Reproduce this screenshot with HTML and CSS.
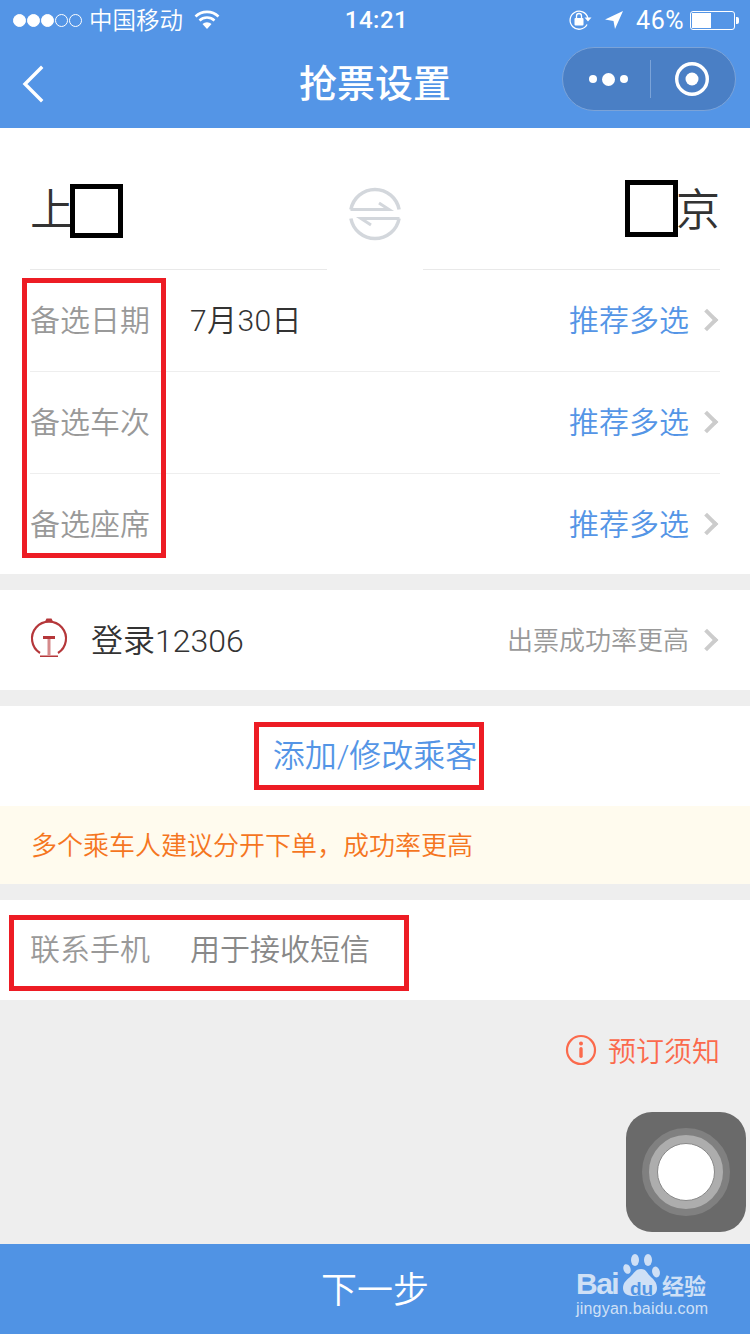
FILE: index.html
```html
<!DOCTYPE html>
<html>
<head>
    <title>抢票设置</title>
    <link rel="stylesheet" href="styles.css">
</head>
<body>
    <div class="page">
        <div class="top-bar">
            <div class="status-bar">
                <div class="status-left">
                    <span class="signal"><i class="on"></i><i class="on"></i><i class="on"></i><i></i><i></i></span>
                    <span class="carrier">中国移动</span>
                    <svg class="wifi" width="26" height="20" viewBox="0 0 26 20"><path d="M1.500 6.500a16.500 16.500 0 0 1 23 0" fill="none" stroke="#fff" stroke-width="2.600"/><path d="M5.500 10.500a11 11 0 0 1 15 0" fill="none" stroke="#fff" stroke-width="2.600"/><path d="M8.500 14a6.500 6.500 0 0 1 9 0L13 19z" fill="#fff"/></svg>
                </div>
                <div class="clock">14:21</div>
                <div class="status-right">
                    <svg width="24" height="22" viewBox="0 0 24 22"><path d="M19 15.500A9 9 0 1 1 19.800 9" fill="none" stroke="#fff" stroke-width="1.300"/><path d="M16.500 8.500h7l-3.500 4z" fill="#fff"/><rect x="6.500" y="9" width="9" height="7.500" rx="1" fill="#fff"/><path d="M8.500 9V7a2.500 2.500 0 0 1 5 0v2" fill="none" stroke="#fff" stroke-width="1.300"/></svg>
                    <svg class="arrow" width="20" height="20" viewBox="0 0 20 20"><path d="M19 1 1 9.500l8.500 1.500L11 19z" fill="#fff"/></svg>
                    <span class="battery-text">46%</span>
                    <span class="battery"><span class="battery-fill"></span></span>
                </div>
            </div>
            <div class="nav-bar">
                <svg class="back" width="24" height="38" viewBox="0 0 24 38"><path d="M20 3 4 19l16 16" fill="none" stroke="#fff" stroke-width="3.400" stroke-linecap="square"/></svg>
                <h1 class="nav-title">抢票设置</h1>
                <div class="capsule">
                    <div class="capsule-dots"><i></i><i class="big"></i><i></i></div>
                    <div class="capsule-line"></div>
                    <svg width="36" height="36" viewBox="0 0 36 36"><circle cx="18" cy="18" r="15.300" fill="none" stroke="#fff" stroke-width="3.400"/><circle cx="18" cy="18" r="6.500" fill="#fff"/></svg>
                </div>
            </div>
        </div>

        <div class="panel">
            <div class="stations">
                <div class="station">上</div>
                <svg class="swap" width="54" height="54" viewBox="0 0 54 54">
                    <path d="M2.900 22.500A24.500 24.500 0 0 1 51.100 22.500M2.900 31.500A24.500 24.500 0 0 0 51.100 31.500" fill="none" stroke="#d3d7dc" stroke-width="3.500"/>
                    <path d="M2.500 22.500H41L31 16M51.500 31.500H13L23 38" fill="none" stroke="#d3d7dc" stroke-width="3"/>
                </svg>
                <div class="station">京</div>
            </div>
            <div class="option-row">
                <span class="row-label">备选日期</span>
                <span class="row-value">7月30日</span>
                <span class="row-link">推荐多选</span>
                <span class="chevron"></span>
            </div>
            <div class="option-row">
                <span class="row-label">备选车次</span>
                <span class="row-value"></span>
                <span class="row-link">推荐多选</span>
                <span class="chevron"></span>
            </div>
            <div class="option-row">
                <span class="row-label">备选座席</span>
                <span class="row-value"></span>
                <span class="row-link">推荐多选</span>
                <span class="chevron"></span>
            </div>
        </div>

        <div class="panel login-row">
            <svg class="logo-12306" width="40" height="40" viewBox="0 0 40 40">
                <path d="M11 35A17 17 0 1 1 29 35" fill="none" stroke="#b5373a" stroke-width="2.200"/>
                <path d="M16 3.500h8l-1.500-3h-5z" fill="#b5373a"/>
                <path d="M14 18h12v3H14zM11 37.500h18V39H11z" fill="#b5373a"/>
                <rect x="18.500" y="21" width="3" height="16.500" fill="#d58a8b"/>
            </svg>
            <span class="login-text">登录12306</span>
            <span class="login-hint">出票成功率更高</span>
            <span class="chevron"></span>
        </div>

        <div class="panel passenger-panel">
            <div class="passenger-row">添加/修改乘客</div>
            <div class="notice-row">多个乘车人建议分开下单，成功率更高</div>
        </div>

        <div class="panel contact-row">
            <span class="row-label">联系手机</span>
            <span class="contact-hint">用于接收短信</span>
        </div>

        <div class="grey-area">
            <div class="booking-note">
                <svg width="32" height="32" viewBox="0 0 32 32"><circle cx="16" cy="16" r="14" fill="none" stroke="#fb6a4c" stroke-width="2.200"/><circle cx="16" cy="9.500" r="2" fill="#fb6a4c"/><rect x="14.300" y="13" width="3.400" height="11" rx="1.700" fill="#fb6a4c"/></svg>
                <span>预订须知</span>
            </div>
        </div>

        <div class="footer-btn">下一步</div>

        <!-- 标注框 -->
        <div class="mark-black mark-from"></div>
        <div class="mark-black mark-to"></div>
        <div class="mark-red mark-labels"></div>
        <div class="mark-red mark-passenger"></div>
        <div class="mark-red mark-contact"></div>

        <div class="assistive"><div class="assistive-ring"><div class="assistive-dot"></div></div></div>

        <div class="watermark">
            <div class="wm-top">
                <span class="wm-bai">Bai</span>
                <svg class="wm-paw" width="40" height="46" viewBox="0 0 40 46">
                    <ellipse cx="7" cy="17" rx="3.500" ry="5" fill="#cfe0f6" transform="rotate(-20 7 17)"/>
                    <ellipse cx="15" cy="8" rx="4" ry="6" fill="#cfe0f6"/>
                    <ellipse cx="28" cy="8" rx="4" ry="6" fill="#cfe0f6"/>
                    <ellipse cx="36" cy="20" rx="3.800" ry="5.500" fill="#cfe0f6" transform="rotate(-15 36 20)"/>
                    <path d="M21 17c5 0 6 4 9 7s7 6 7 12-4 8-9 8c-3 0-5-1-7-1s-4 1-7 1c-6 0-11-2-11-8s5-9 8-12 5-7 10-7z" fill="#cfe0f6"/>
                </svg>
                <span class="wm-du">du</span>
                <span class="wm-cn">经验</span>
            </div>
            <div class="wm-url">jingyan.baidu.com</div>
        </div>
    </div>
</body>
</html>
```

FILE: styles.css
```css
* {
    box-sizing: border-box;
}
html, body {
    margin: 0;
    padding: 0;
}
body {
    font-family: Roboto, "Noto Sans CJK SC", sans-serif;
    color: #333;
    background-color: #eee;
}
.page {
    position: relative;
    display: flex;
    flex-direction: column;
    width: 750px;
    height: 1334px;
    overflow: hidden;
}

/* 顶部 */
.top-bar {
    height: 128px;
    background-color: #5495e6;
    color: white;
}
.status-bar {
    display: flex;
    align-items: center;
    justify-content: space-between;
    height: 40px;
    padding: 0 11px 0 13px;
    position: relative;
}
.status-left, .status-right {
    display: flex;
    align-items: center;
}
.signal {
    display: flex;
    gap: 1px;
    margin-right: 7px;
}
.signal i {
    width: 13px;
    height: 13px;
    border: 1px solid white;
    border-radius: 50%;
}
.signal i.on {
    background: white;
}
.carrier {
    font-size: 23.500px;
    font-weight: 350;
    margin: -2px 11px 0 0;
}
.clock {
    position: absolute;
    left: 0;
    right: 0;
    padding-left: 3px;
    text-align: center;
    font-size: 24px;
    font-weight: 500;
    letter-spacing: 0.500px;
}
.status-right svg {
    margin-right: 12px;
}
.battery-text {
    font-size: 25px;
    letter-spacing: 0.500px;
    margin-right: 6px;
}
.battery {
    position: relative;
    width: 45px;
    height: 19px;
    border: 1px solid white;
    border-radius: 3px;
    padding: 1px;
    margin-right: 4px;
}
.battery:after {
    content: "";
    position: absolute;
    right: -5px;
    top: 5px;
    width: 3px;
    height: 7px;
    background: white;
    border-radius: 0 2px 2px 0;
}
.battery-fill {
    display: block;
    width: 46%;
    height: 100%;
    background: white;
}
.nav-bar {
    display: flex;
    align-items: center;
    justify-content: space-between;
    height: 88px;
    padding: 0 14px 0 21px;
    position: relative;
}
.nav-title {
    position: absolute;
    left: 0;
    right: 0;
    margin: -8px 0 0;
    text-align: center;
    font-size: 38px;
    font-weight: 500;
}
.capsule {
    display: flex;
    align-items: center;
    width: 174px;
    height: 64px;
    margin-top: -10px;
    padding: 0 15px 0 26px;
    background-color: #4a7fc5;
    border: 1px solid #7ba3d8;
    border-radius: 32px;
}
.capsule-dots {
    display: flex;
    align-items: center;
    gap: 5px;
    margin-right: 22px;
}
.capsule-dots i {
    width: 8px;
    height: 8px;
    background: white;
    border-radius: 50%;
}
.capsule-dots i.big {
    width: 13px;
    height: 13px;
}
.capsule-line {
    width: 1px;
    height: 38px;
    background-color: #7ba3d8;
    margin-right: 23px;
}

/* 内容 */
.panel {
    background: white;
}
.stations {
    display: flex;
    align-items: center;
    justify-content: space-between;
    height: 142px;
    padding: 24px 30px 0;
    background: linear-gradient(#e9e9e9, #e9e9e9) 30px 100% / 297px 1px no-repeat,
                linear-gradient(#e9e9e9, #e9e9e9) 423px 100% / 297px 1px no-repeat;
}
.station {
    width: 44px;
    font-size: 44px;
    font-weight: 350;
    line-height: 54px;
}
.swap {
    margin-top: 6px;
}
.option-row {
    display: flex;
    align-items: center;
    height: 102px;
    margin: 0 30px;
    padding-bottom: 5px;
    border-bottom: 1px solid #eee;
    font-size: 30px;
}
.option-row:last-child {
    border-bottom: none;
    height: 100px;
}
.row-label {
    width: 160px;
    font-size: 30px;
    font-weight: 350;
    color: #999;
}
.row-value {
    flex: 1;
    color: #333;
    font-weight: 350;
    letter-spacing: 0.400px;
}
.row-link {
    color: #5495e6;
    font-weight: 350;
}
.chevron {
    width: 16px;
    height: 16px;
    margin: 4px 5px 0 10px;
    border-top: 4px solid #ccc;
    border-right: 4px solid #ccc;
    transform: rotate(45deg);
}
.login-row {
    display: flex;
    align-items: center;
    height: 100px;
    margin-top: 16px;
    padding: 0 30px 4px 29px;
}
.logo-12306 {
    margin-right: 22px;
}
.login-text {
    flex: 1;
    font-size: 32px;
    font-weight: 350;
}
.login-hint {
    font-size: 26px;
    font-weight: 350;
    color: #999;
}
.passenger-panel {
    margin-top: 16px;
}
.passenger-row {
    height: 100px;
    line-height: 100px;
    text-align: center;
    font-size: 32px;
    font-weight: 350;
    color: #5495e6;
}
.notice-row {
    height: 78px;
    padding-left: 31px;
    line-height: 80px;
    font-size: 26px;
    font-weight: 350;
    color: #f5761f;
    background-color: #fffbee;
}
.contact-row {
    display: flex;
    align-items: center;
    height: 100px;
    margin-top: 16px;
    padding: 0 0 6px 30px;
}
.contact-hint {
    font-size: 30px;
    font-weight: 350;
    color: #888;
}
.grey-area {
    flex: 1;
    padding: 30px 30px 0 0;
}
.booking-note {
    display: flex;
    align-items: center;
    justify-content: flex-end;
    gap: 11px;
    font-size: 28px;
    font-weight: 350;
    color: #fb6a4c;
}
.footer-btn {
    height: 90px;
    line-height: 94px;
    text-align: center;
    font-size: 36px;
    font-weight: 350;
    color: white;
    background-color: #5093e4;
}

/* 标注框 */
.mark-black, .mark-red {
    position: absolute;
}
.mark-black {
    border: 5px solid black;
    background: white;
}
.mark-red {
    border: 5px solid #ed1c24;
}
.mark-from {
    left: 70px;
    top: 184px;
    width: 53px;
    height: 54px;
}
.mark-to {
    left: 625px;
    top: 180px;
    width: 53px;
    height: 57px;
}
.mark-labels {
    left: 22px;
    top: 278px;
    width: 144px;
    height: 280px;
}
.mark-passenger {
    left: 254px;
    top: 722px;
    width: 230px;
    height: 68px;
}
.mark-contact {
    left: 9px;
    top: 915px;
    width: 400px;
    height: 76px;
}

/* 悬浮按钮 */
.assistive {
    position: absolute;
    left: 626px;
    top: 1112px;
    display: flex;
    align-items: center;
    justify-content: center;
    width: 120px;
    height: 120px;
    background-color: #6a6a6a;
    border-radius: 26px;
}
.assistive-ring {
    display: flex;
    align-items: center;
    justify-content: center;
    width: 88px;
    height: 88px;
    background-color: #adadad;
    border: 7px solid #808080;
    border-radius: 50%;
}
.assistive-dot {
    width: 58px;
    height: 58px;
    background: white;
    border: 1px solid #888;
    border-radius: 50%;
}

/* 水印 */
.watermark {
    position: absolute;
    left: 576px;
    top: 1254px;
    width: 140px;
    color: #cfe0f6;
    font-family: "Liberation Sans", "Noto Sans CJK SC", sans-serif;
}
.wm-top {
    position: relative;
    height: 46px;
}
.wm-bai {
    position: absolute;
    left: 0;
    top: 13px;
    font-size: 30px;
    font-weight: bold;
    letter-spacing: -1.500px;
}
.wm-paw {
    position: absolute;
    left: 44px;
    top: -2px;
}
.wm-du {
    position: absolute;
    left: 54px;
    top: 24px;
    font-size: 19px;
    font-weight: bold;
    color: #5093e4;
}
.wm-cn {
    position: absolute;
    left: 86px;
    top: 14px;
    font-size: 22px;
    font-weight: bold;
}
.wm-url {
    font-size: 16px;
    letter-spacing: 0.200px;
}
```
